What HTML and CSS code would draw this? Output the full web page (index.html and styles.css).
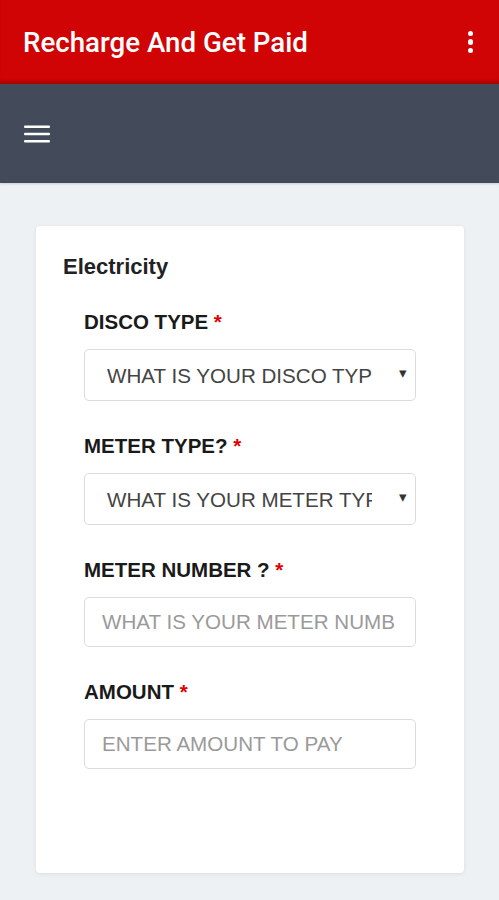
FILE: index.html
```html
<!DOCTYPE html>
<html>
<head>
    <meta charset="utf-8">
    <title>Recharge And Get Paid</title>
    <link rel="stylesheet" href="styles.css">
</head>
<body>
    <header class="appbar">
        <h1>Recharge And Get Paid</h1>
        <div class="kebab"><span></span><span></span><span></span></div>
    </header>

    <nav class="toolbar">
        <svg class="burger" width="26" height="18" viewBox="0 0 26 18">
            <rect x="0" y="0.5" width="26" height="2.6" rx="1" fill="#fff"/>
            <rect x="0" y="7.7" width="26" height="2.6" rx="1" fill="#fff"/>
            <rect x="0" y="14.9" width="26" height="2.6" rx="1" fill="#fff"/>
        </svg>
    </nav>

    <main class="page">
        <section class="card">
            <h2>Electricity</h2>
            <form class="fields">
                <div class="field">
                    <label>DISCO TYPE <span class="req">*</span></label>
                    <div class="select-wrap">
                        <select class="control select">
                            <option>WHAT IS YOUR DISCO TYPE?</option>
                        </select>
                    </div>
                </div>
                <div class="field">
                    <label>METER TYPE? <span class="req">*</span></label>
                    <div class="select-wrap">
                        <select class="control select">
                            <option>WHAT IS YOUR METER TYPE?</option>
                        </select>
                    </div>
                </div>
                <div class="field">
                    <label>METER NUMBER ? <span class="req">*</span></label>
                    <input class="control input" type="text" placeholder="WHAT IS YOUR METER NUMBER?">
                </div>
                <div class="field">
                    <label>AMOUNT <span class="req">*</span></label>
                    <input class="control input" type="text" placeholder="ENTER AMOUNT TO PAY">
                </div>
            </form>
        </section>
    </main>
</body>
</html>
```

FILE: styles.css
```css
html, body {
    margin: 0;
    padding: 0;
}

body {
    font-family: "Liberation Sans", Arial, sans-serif;
    background: #edf1f4;
    min-height: 900px;
}

.appbar {
    height: 84px;
    background: #d00404;
    display: flex;
    align-items: center;
    justify-content: space-between;
    padding: 0 26px 0 23px;
    box-shadow: inset 0 -4px 3px -1px rgba(0, 0, 0, 0.18);
    box-sizing: border-box;
}

.appbar h1 {
    margin: 0;
    font-family: Roboto, "Noto Sans", sans-serif;
    font-weight: 500;
    font-size: 27.7px;
    color: #fff;
}

.kebab {
    display: flex;
    flex-direction: column;
    gap: 3px;
}

.kebab span {
    width: 5.5px;
    height: 5.5px;
    border-radius: 50%;
    background: #fff;
}

.toolbar {
    height: 99px;
    background: #434a59;
    display: flex;
    align-items: center;
    padding-left: 24px;
    box-sizing: border-box;
    box-shadow: 0 1px 2px rgba(0, 0, 0, 0.15);
}

.burger {
    display: block;
    margin-top: 1px;
}

.page {
    padding: 43px 35px 27px 36px;
}

.card {
    background: #fff;
    border-radius: 4px;
    box-shadow: 0 1px 4px rgba(0, 0, 0, 0.08);
    height: 647px;
    box-sizing: border-box;
    padding: 28px 48px 0 27px;
}

.card h2 {
    margin: 0;
    font-size: 22px;
    font-weight: bold;
    color: #222;
    line-height: 26px;
}

.fields {
    padding-left: 21px;
    margin-top: 31px;
}

.field {
    margin-bottom: 34px;
}

.field label {
    display: block;
    font-size: 20.5px;
    font-weight: bold;
    color: #1a1a1a;
    line-height: 22px;
    margin-bottom: 16px;
}

.req {
    color: #e00000;
}

.select-wrap {
    position: relative;
}

.select-wrap::after {
    content: "\25BE";
    position: absolute;
    right: 9px;
    top: 15px;
    font-size: 15px;
    color: #333;
    pointer-events: none;
}

.control {
    display: block;
    width: 100%;
    box-sizing: border-box;
    border: 1px solid #dcdcdc;
    border-radius: 5px;
    background: #fff;
    font-family: "Liberation Sans", Arial, sans-serif;
    font-size: 20.6px;
    outline: none;
    margin: 0;
}

.select {
    -webkit-appearance: none;
    appearance: none;
    height: 52px;
    padding: 0 43px 0 22px;
    color: #444;
}

.input {
    height: 50px;
    padding: 0 19px 0 17px;
    color: #444;
}

.input::placeholder {
    color: #9a9a9a;
}
```
